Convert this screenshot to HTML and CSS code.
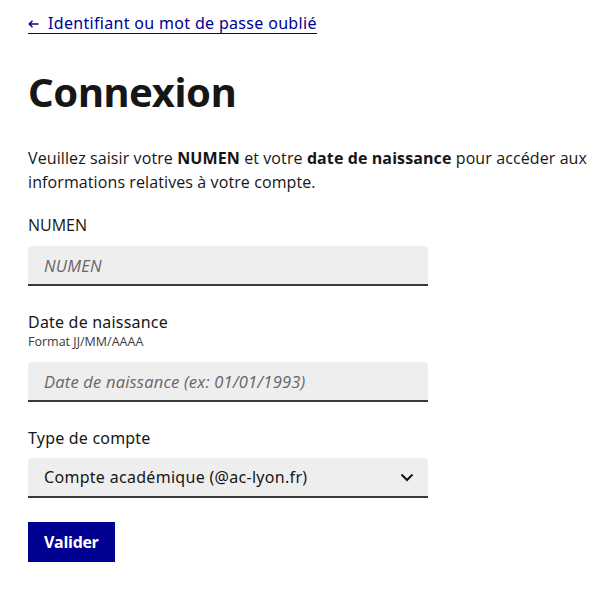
FILE: index.html
```html
<!DOCTYPE html>
<html lang="fr">
<head>
<meta charset="utf-8">
<title>Connexion</title>
<link rel="stylesheet" href="styles.css">
</head>
<body>
<main class="page">
  <a class="back-link" href="#"><svg class="arrow" width="11" height="8" viewBox="0 0 11 8"><path d="M10.5 4 H1.2 M4.5 0.8 L1.2 4 L4.5 7.2" fill="none" stroke="#000091" stroke-width="1.4"/></svg>Identifiant ou mot de passe oublié</a>
  <h1 class="title">Connexion</h1>
  <p class="intro">Veuillez saisir votre <b>NUMEN</b> et votre <b>date de naissance</b> pour accéder aux informations relatives à votre compte.</p>
  <form class="form">
    <div class="group">
      <label class="label label-alt" for="numen">NUMEN</label>
      <input class="input" id="numen" type="text" placeholder="NUMEN">
    </div>
    <div class="group">
      <label class="label" for="ddn">Date de naissance<span class="hint">Format JJ/MM/AAAA</span></label>
      <input class="input" id="ddn" type="text" placeholder="Date de naissance (ex: 01/01/1993)">
    </div>
    <div class="group">
      <label class="label" for="type">Type de compte</label>
      <div class="select">
        <span class="select-value">Compte académique (@ac-lyon.fr)</span>
        <svg class="chevron" width="14" height="9" viewBox="0 0 14 9"><path d="M1.5 1.5 L7 7 L12.5 1.5" fill="none" stroke="#161616" stroke-width="2"/></svg>
      </div>
    </div>
    <button class="btn" type="button">Valider</button>
  </form>
</main>
</body>
</html>
```
FILE: styles.css
```css
* { box-sizing: border-box; }
html, body { margin: 0; padding: 0; background: #fff; }
body {
  font-family: "Noto Sans", "Liberation Sans", sans-serif;
  color: #161616;
}
.page {
  padding: 13px 8px 0 28px;
  display: flex;
  flex-direction: column;
  align-items: flex-start;
}
.back-link {
  color: #000091;
  text-decoration: none;
  border-bottom: 1px solid #000091;
  font-size: 16px;
  line-height: 20px;
  padding-bottom: 0;
  letter-spacing: 0.32px;
  display: inline-flex;
  align-items: center;
}
.arrow {
  margin-right: 9px;
  margin-top: 1px;
}
.title {
  margin: 34px 0 0 0;
  font-size: 40px;
  line-height: 48px;
  font-weight: 700;
  letter-spacing: -0.4px;
}
.intro {
  margin: 30px 0 0 0;
  font-family: "Open Sans", sans-serif;
  font-size: 16px;
  line-height: 24px;
  letter-spacing: 0.1px;
  max-width: 569px;
}
.intro b { font-weight: 700; }
.form {
  width: 400px;
  display: flex;
  flex-direction: column;
  margin-top: 19px;
}
.group { display: flex; flex-direction: column; margin-bottom: 24px; }
.label {
  font-size: 16px;
  line-height: 24px;
  letter-spacing: 0.2px;
  display: flex;
  flex-direction: column;
  margin-bottom: 8px;
}
.label-alt {
  font-family: "Open Sans", sans-serif;
  letter-spacing: 0;
  margin-bottom: 9px;
}
.hint {
  font-family: "Open Sans", sans-serif;
  font-size: 12.5px;
  line-height: 16px;
  color: #3a3a3a;
  letter-spacing: 0;
  margin-bottom: 4px;
}
.input {
  width: 100%;
  height: 40px;
  border: 0;
  border-bottom: 2px solid #3a3a3a;
  border-radius: 4px 4px 0 0;
  background: #eeeeee;
  padding: 0 16px;
  font-size: 16.5px;
  font-family: "Open Sans", sans-serif;
  outline: none;
}
.input::placeholder {
  color: #666666;
  font-style: italic;
  letter-spacing: 0.2px;
}
.select {
  height: 40px;
  border-bottom: 2px solid #3a3a3a;
  border-radius: 4px 4px 0 0;
  background: #eeeeee;
  padding: 0 14px 0 16px;
  display: flex;
  align-items: center;
  justify-content: space-between;
  font-size: 16px;
  letter-spacing: 0.3px;
}
.btn {
  align-self: flex-start;
  background: #000091;
  color: #fff;
  border: 0;
  height: 40px;
  padding: 0 16px;
  font-family: "Open Sans", sans-serif;
  font-weight: 700;
  font-size: 16px;
  letter-spacing: -0.3px;
  margin-top: 0;
}
```
